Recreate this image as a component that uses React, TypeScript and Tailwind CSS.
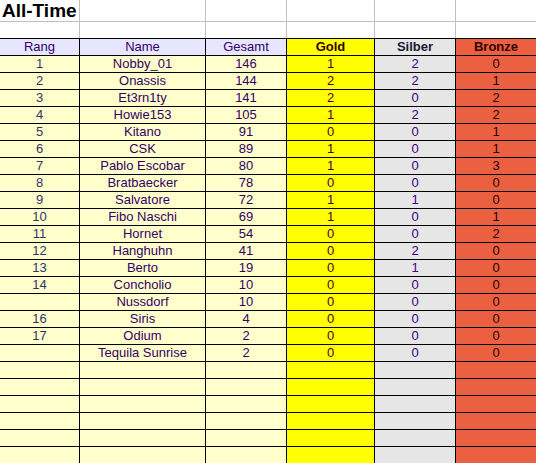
import React from "react";

type Row = [string, string, string, string, string, string];

const rows: Row[] = [
  ["1", "Nobby_01", "146", "1", "2", "0"],
  ["2", "Onassis", "144", "2", "2", "1"],
  ["3", "Et3rn1ty", "141", "2", "0", "2"],
  ["4", "Howie153", "105", "1", "2", "2"],
  ["5", "Kitano", "91", "0", "0", "1"],
  ["6", "CSK", "89", "1", "0", "1"],
  ["7", "Pablo Escobar", "80", "1", "0", "3"],
  ["8", "Bratbaecker", "78", "0", "0", "0"],
  ["9", "Salvatore", "72", "1", "1", "0"],
  ["10", "Fibo Naschi", "69", "1", "0", "1"],
  ["11", "Hornet", "54", "0", "0", "2"],
  ["12", "Hanghuhn", "41", "0", "2", "0"],
  ["13", "Berto", "19", "0", "1", "0"],
  ["14", "Concholio", "10", "0", "0", "0"],
  ["", "Nussdorf", "10", "0", "0", "0"],
  ["16", "Siris", "4", "0", "0", "0"],
  ["17", "Odium", "2", "0", "0", "0"],
  ["", "Tequila Sunrise", "2", "0", "0", "0"],
  ["", "", "", "", "", ""],
  ["", "", "", "", "", ""],
  ["", "", "", "", "", ""],
  ["", "", "", "", "", ""],
  ["", "", "", "", "", ""],
  ["", "", "", "", "", ""],
];

const widths = ["w-[80px]", "w-[126px]", "w-[81px]", "w-[88px]", "w-[81px]", "flex-1"];

export default function App() {
  return (
    <div
      className="w-[536px] h-[463px] overflow-hidden bg-white text-[13px]"
      style={{ fontFamily: '"Liberation Sans", Arial, sans-serif' }}
    >
      {/* Title row */}
      <div className="flex h-[22px] border-b border-[#c0c0c0]">
        <div className="w-[80px] border-r border-[#c0c0c0] pl-[2px] text-[19px] font-bold leading-[21px] text-black whitespace-nowrap">
          All-Time
        </div>
        <div className="w-[126px] border-r border-[#c0c0c0]" />
        <div className="w-[81px] border-r border-[#c0c0c0]" />
        <div className="w-[88px] border-r border-[#c0c0c0]" />
        <div className="w-[81px] border-r border-[#c0c0c0]" />
        <div className="flex-1" />
      </div>
      {/* Empty row */}
      <div className="flex h-[16px]">
        <div className="w-[80px] border-r border-[#c0c0c0]" />
        <div className="w-[126px] border-r border-[#c0c0c0]" />
        <div className="w-[81px] border-r border-[#c0c0c0]" />
        <div className="w-[88px] border-r border-[#c0c0c0]" />
        <div className="w-[81px] border-r border-[#c0c0c0]" />
        <div className="flex-1" />
      </div>
      {/* Header */}
      <div className="flex h-[18px] border-y border-black leading-[16px] text-center">
        <div className="w-[80px] border-r border-black bg-[#e6e6ff] text-[#330066]">Rang</div>
        <div className="w-[126px] border-r border-black bg-[#e6e6ff] text-[#330066]">Name</div>
        <div className="w-[81px] border-r border-black bg-[#e6e6ff] text-[#330066]">Gesamt</div>
        <div className="w-[88px] border-r border-black bg-[#ffff00] font-bold text-[#330000]">Gold</div>
        <div className="w-[81px] border-r border-black bg-[#e6e6e6] font-bold text-[#1a1a33]">Silber</div>
        <div className="flex-1 bg-[#ea6040] font-bold text-[#330000]">Bronze</div>
      </div>
      {rows.map((r, i) => (
        <div key={i} className="flex h-[17px] border-b border-black leading-[16px] text-center">
          <div className={`${widths[0]} border-r border-black bg-[#ffffcc] text-[#333366]`}>{r[0]}</div>
          <div className={`${widths[1]} border-r border-black bg-[#ffffcc] text-[#330066] whitespace-nowrap`}>{r[1]}</div>
          <div className={`${widths[2]} border-r border-black bg-[#ffffcc] text-[#330066]`}>{r[2]}</div>
          <div className={`${widths[3]} border-r border-black bg-[#ffff00] text-[#4d0033]`}>{r[3]}</div>
          <div className={`${widths[4]} border-r border-black bg-[#e6e6e6] text-[#400080]`}>{r[4]}</div>
          <div className={`${widths[5]} bg-[#ea6040] text-[#260000]`}>{r[5]}</div>
        </div>
      ))}
    </div>
  );
}
